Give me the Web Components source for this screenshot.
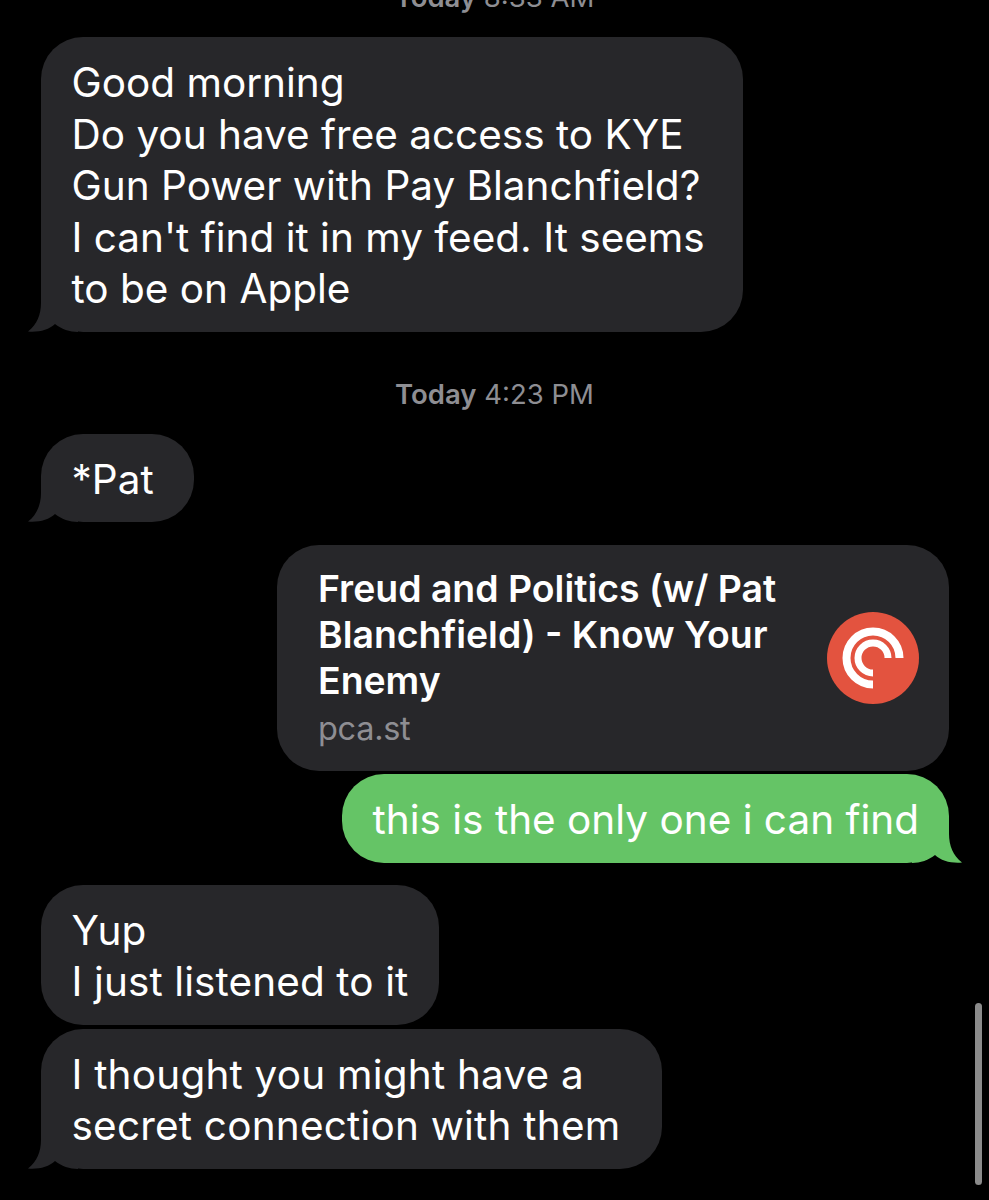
<!DOCTYPE html>
<html>
<head>
<meta charset="utf-8">
<title>Messages</title>
<style>
  html, body { margin: 0; background: #000; }
  body { height: 1200px; overflow: hidden; font-family: Inter, "Liberation Sans", sans-serif; }
  .top-time { margin-top: -20px; }
  .first { margin-top: 23px; --pad-right: 38px; }
  .next-time { margin-top: 45px; }
  .after-time { margin-top: 23px; --pad-right: 40px; }
  .card { margin-top: 23px; }
  .close { margin-top: 3px; --pad-right: 30px; }
  .far { margin-top: 22px; --track: 0.1px; }
  .last { margin-top: 4px; --pad-right: 42px; --track: 0.2px; }
</style>
</head>
<body>
<template id="bubble-tpl">
  <style>
    :host { display: flex; padding: 0 40px 0 41px; }
    :host([side="out"]) { justify-content: flex-end; }
    .bubble {
      position: relative;
      background: #27272a;
      color: #fff;
      border-radius: 42px;
      padding: 20px var(--pad-right, 31px) 17px 30.5px;
      font-size: 40.5px;
      line-height: 51.5px;
      letter-spacing: var(--track, 0);
      white-space: nowrap;
    }
    .text { position: relative; }
    :host([side="out"]) .bubble { background: #65c466; }
    svg { display: none; position: absolute; bottom: 0; left: -13px; width: 50px; height: 44px; fill: #27272a; }
    :host([tail]) svg { display: block; }
    :host([side="out"]) svg { left: auto; right: -13px; transform: scaleX(-1); fill: #65c466; }
  </style>
  <div class="bubble">
    <svg viewBox="0 0 50 44"><path d="M13 0L13 15C13 26 9 37 0 43.5C10 44.5 21 42 27 36C33 41 42 44 50 44L50 0Z"/></svg>
    <span class="text"><slot></slot></span>
  </div>
</template>

<template id="time-tpl">
  <style>
    :host { display: block; text-align: center; color: #8e8e93; font-size: 27.5px; line-height: 34px; }
    b { font-weight: 600; }
  </style>
  <b><slot name="day"></slot></b> <slot></slot>
</template>

<template id="card-tpl">
  <style>
    :host { display: flex; justify-content: flex-end; padding-right: 40px; }
    .card {
      display: flex;
      align-items: center;
      gap: 20px;
      width: 672px;
      height: 226px;
      box-sizing: border-box;
      padding: 21px 30px 21px 41px;
      background: #27272a;
      border-radius: 42px;
    }
    .text { flex: 1; margin-top: 4px; }
    .title { color: #fff; font-size: 37.4px; line-height: 46px; font-weight: 600; white-space: nowrap; }
    .host { color: #8e8e93; font-size: 32.5px; line-height: 50px; letter-spacing: -0.3px; }
    svg { width: 92px; height: 92px; flex: none; }
  </style>
  <div class="card">
    <div class="text">
      <div class="title"><slot name="title"></slot></div>
      <div class="host"><slot name="host"></slot></div>
    </div>
    <svg viewBox="0 0 92 92">
      <circle cx="46" cy="46" r="46" fill="#e3533f"/>
      <g fill="none" stroke="#fff">
        <path stroke-width="8" d="M72.5 46A26.5 26.5 0 1 0 46 72.5"/>
        <path stroke-width="7" d="M61 46A15 15 0 1 0 46 61"/>
      </g>
    </svg>
  </div>
</template>

<template id="thumb-tpl">
  <style>
    :host { display: block; position: absolute; left: 975px; top: 1003px; width: 7px; height: 182px; border-radius: 4px; background: #8b8b8b; }
  </style>
</template>

<template id="thread-tpl">
  <style>
    :host { display: flex; flex-direction: column; position: relative; height: 1200px; overflow: hidden; }
  </style>
  <slot></slot>
</template>

<chat-thread>
  <chat-time class="top-time"><span slot="day">Today</span> 8:33 AM</chat-time>
  <chat-bubble class="first" tail>Good morning<br>Do you have free access to KYE<br>Gun Power with Pay Blanchfield?<br>I can't find it in my feed. It seems<br>to be on Apple</chat-bubble>
  <chat-time class="next-time"><span slot="day">Today</span> 4:23 PM</chat-time>
  <chat-bubble class="after-time" tail>*Pat</chat-bubble>
  <link-card class="card">
    <span slot="title">Freud and Politics (w/ Pat<br>Blanchfield) - Know Your<br>Enemy</span>
    <span slot="host">pca.st</span>
  </link-card>
  <chat-bubble class="close" side="out" tail>this is the only one i can find</chat-bubble>
  <chat-bubble class="far">Yup<br>I just listened to it</chat-bubble>
  <chat-bubble class="last" tail>I thought you might have a<br>secret connection with them</chat-bubble>
  <scroll-thumb></scroll-thumb>
</chat-thread>

<script>
  // every element just stamps its own template into an open shadow root
  class TemplateElement extends HTMLElement {
    connectedCallback() {
      if (this.shadowRoot) return;
      this.attachShadow({ mode: 'open' });
      const tpl = document.getElementById(this.constructor.tpl);
      this.shadowRoot.appendChild(tpl.content.cloneNode(true));
    }
  }
  const define = (name, tpl) => customElements.define(name, class extends TemplateElement {
    static tpl = tpl;
  });
  define('chat-thread', 'thread-tpl');
  define('chat-bubble', 'bubble-tpl');
  define('chat-time', 'time-tpl');
  define('link-card', 'card-tpl');
  define('scroll-thumb', 'thumb-tpl');
</script>
</body>
</html>
